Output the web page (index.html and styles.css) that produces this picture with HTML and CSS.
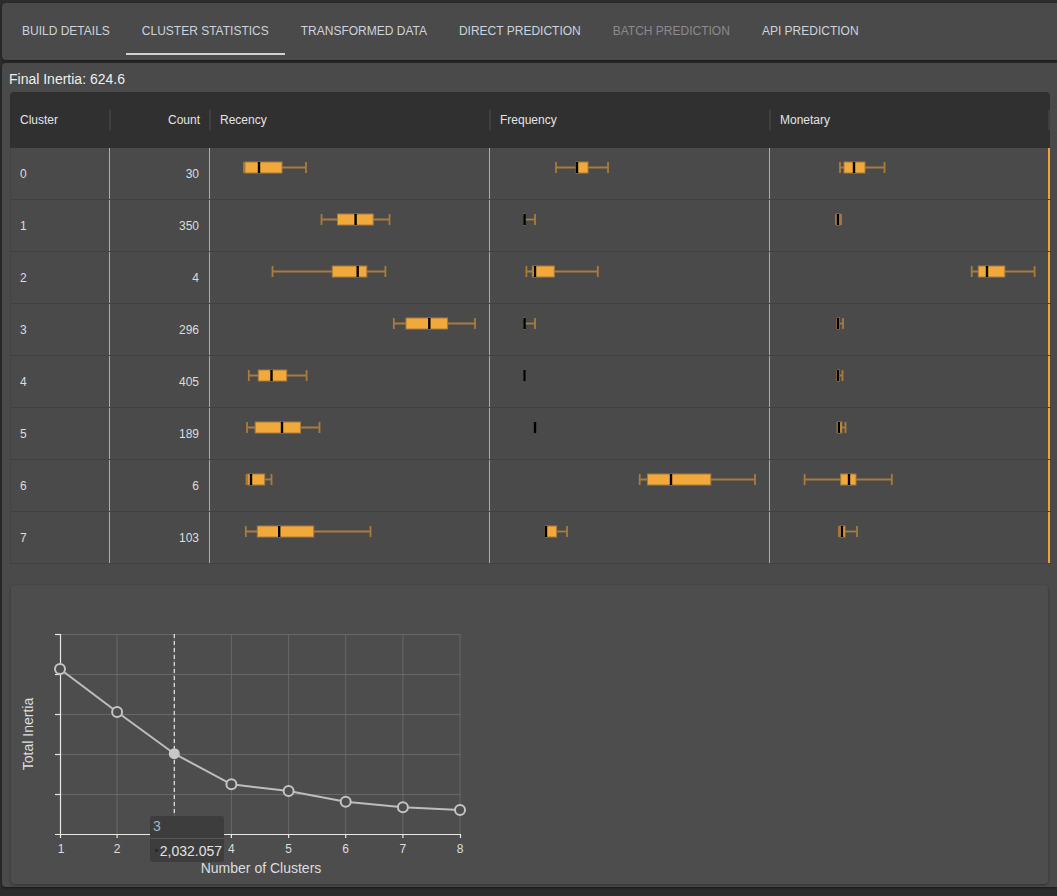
FILE: index.html
```html
<!DOCTYPE html>
<html>
<head>
    <title>Cluster Statistics</title>
    <link rel="stylesheet" href="styles.css">
</head>
<body>
    <div class="card tab-bar">
        <div class="tab">Build Details</div>
        <div class="tab active">Cluster Statistics</div>
        <div class="tab">Transformed Data</div>
        <div class="tab">Direct Prediction</div>
        <div class="tab disabled">Batch Prediction</div>
        <div class="tab">API Prediction</div>
    </div>

    <div class="card content">
        <div class="inertia">Final Inertia: 624.6</div>

        <div class="stats-table">
            <div class="head-row">
                <div class="head-cell">Cluster</div>
                <div class="head-cell sep num">Count</div>
                <div class="head-cell sep">Recency</div>
                <div class="head-cell sep">Frequency</div>
                <div class="head-cell sep last">Monetary</div>
            </div>
            <div class="body-rows"></div>
        </div>

        <div class="chart-panel">
            <svg class="elbow" width="1037" height="299" viewBox="0 0 1037 299">
                <g class="grid">
                    <line x1="106.1" y1="49" x2="106.1" y2="249"/>
                    <line x1="163.3" y1="49" x2="163.3" y2="249"/>
                    <line x1="220.4" y1="49" x2="220.4" y2="249"/>
                    <line x1="277.6" y1="49" x2="277.6" y2="249"/>
                    <line x1="334.7" y1="49" x2="334.7" y2="249"/>
                    <line x1="391.9" y1="49" x2="391.9" y2="249"/>
                    <line x1="449" y1="49" x2="449" y2="249"/>
                    <line x1="49" y1="49.5" x2="449" y2="49.5"/>
                    <line x1="49" y1="89.5" x2="449" y2="89.5"/>
                    <line x1="49" y1="129.5" x2="449" y2="129.5"/>
                    <line x1="49" y1="169.5" x2="449" y2="169.5"/>
                    <line x1="49" y1="209.5" x2="449" y2="209.5"/>
                </g>
                <g class="axis">
                    <line x1="49.5" y1="49" x2="49.5" y2="250"/>
                    <line x1="44" y1="249.5" x2="449.5" y2="249.5"/>
                    <line x1="44" y1="49.5" x2="49" y2="49.5"/>
                    <line x1="44" y1="89.5" x2="49" y2="89.5"/>
                    <line x1="44" y1="129.5" x2="49" y2="129.5"/>
                    <line x1="44" y1="169.5" x2="49" y2="169.5"/>
                    <line x1="44" y1="209.5" x2="49" y2="209.5"/>
                    <line x1="49.5" y1="249" x2="49.5" y2="253"/>
                    <line x1="106.1" y1="249" x2="106.1" y2="253"/>
                    <line x1="163.3" y1="249" x2="163.3" y2="253"/>
                    <line x1="220.4" y1="249" x2="220.4" y2="253"/>
                    <line x1="277.6" y1="249" x2="277.6" y2="253"/>
                    <line x1="334.7" y1="249" x2="334.7" y2="253"/>
                    <line x1="391.9" y1="249" x2="391.9" y2="253"/>
                    <line x1="449.5" y1="249" x2="449.5" y2="253"/>
                </g>
                <!-- label 3 sits under the tooltip -->
                <g class="tick-labels">
                    <text x="50" y="267.5">1</text>
                    <text x="106.1" y="267.5">2</text>
                    <text x="220.4" y="267.5">4</text>
                    <text x="277.6" y="267.5">5</text>
                    <text x="334.7" y="267.5">6</text>
                    <text x="391.9" y="267.5">7</text>
                    <text x="449" y="267.5">8</text>
                </g>
                <text class="axis-title" x="250" y="288">Number of Clusters</text>
                <text class="axis-title" x="22" y="149" transform="rotate(-90 22 149)">Total Inertia</text>

                <line class="cursor" x1="163.3" y1="49" x2="163.3" y2="231"/>

                <polyline class="series" points="49,84 106.1,127 163.3,168.7 220.4,199.3 277.6,206 334.7,216.7 391.9,222.3 449,225"/>
                <g class="dots">
                    <circle cx="49" cy="84" r="5"/>
                    <circle cx="106.1" cy="127" r="5"/>
                    <circle cx="220.4" cy="199.3" r="5"/>
                    <circle cx="277.6" cy="206" r="5"/>
                    <circle cx="334.7" cy="216.7" r="5"/>
                    <circle cx="391.9" cy="222.3" r="5"/>
                    <circle cx="449" cy="225" r="5"/>
                </g>
                <circle class="dot-active" cx="163.3" cy="168.7" r="5.5"/>
            </svg>

            <div class="tooltip">
                <div class="tooltip-title">3</div>
                <div class="tooltip-value"><span class="swatch"></span>2,032.057</div>
            </div>
        </div>
    </div>

    <script>
        // page x positions of each box plot: [min, q1, median, q3, max]
        const clusters = [
            { id: 0, count: 30,
              r: [244, 245, 259, 282, 306], f: [556, 576, 577, 588, 608], m: [840, 844, 854, 865, 884.5] },
            { id: 1, count: 350,
              r: [321.5, 337.5, 355.6, 373.2, 389.5], f: [524, 524, 524.5, 524.5, 535], m: [836, 836.5, 838, 840, 841] },
            { id: 2, count: 4,
              r: [272.5, 332.3, 357.7, 366.8, 385.4], f: [526.4, 532.3, 535, 554.3, 597.8], m: [971.7, 978.3, 987, 1004.8, 1034.6] },
            { id: 3, count: 296,
              r: [393.8, 406, 429.3, 447.6, 475], f: [524, 524, 524.5, 524.5, 535], m: [837, 837.5, 838, 839.5, 843] },
            { id: 4, count: 405,
              r: [248.8, 258.3, 271.5, 286.7, 306.6], f: [524.5, 524.5, 524.5, 524.5, 524.5], m: [837, 837.5, 838, 839.5, 842.5] },
            { id: 5, count: 189,
              r: [247, 255.2, 282, 300.5, 319.5], f: [535, 535, 535, 535, 535], m: [837.5, 837.7, 839, 841.8, 845.5] },
            { id: 6, count: 6,
              r: [246.5, 247.8, 251, 264.7, 271.5], f: [639.7, 647.5, 671, 710.8, 755], m: [804.6, 840.7, 849, 856, 891.8] },
            { id: 7, count: 103,
              r: [245.8, 257.3, 279.2, 313.7, 370.5], f: [545.5, 545.5, 546, 556.6, 567], m: [839, 840, 842, 845, 857] }
        ];

        function boxPlot(values, colStart) {
            const [lo, q1, med, q3, hi] = values.map(v => v - colStart - 1);
            return `<svg class="box" width="278" height="51">
                <line class="whisker" x1="${lo}" y1="19.5" x2="${hi}" y2="19.5"/>
                <line class="whisker" x1="${lo}" y1="14" x2="${lo}" y2="25"/>
                <line class="whisker" x1="${hi}" y1="14" x2="${hi}" y2="25"/>
                <rect class="iqr" x="${q1}" y="14" width="${q3 - q1}" height="11"/>
                <line class="median" x1="${med}" y1="14" x2="${med}" y2="25"/>
            </svg>`;
        }

        const body = document.querySelector('.body-rows');
        clusters.forEach(c => {
            const row = document.createElement('div');
            row.className = 'row';
            row.innerHTML = `
                <div class="cell first">${c.id}</div>
                <div class="cell line num">${c.count}</div>
                <div class="cell line plot">${boxPlot(c.r, 209)}</div>
                <div class="cell line plot">${boxPlot(c.f, 489)}</div>
                <div class="cell line plot last">${boxPlot(c.m, 769)}</div>`;
            body.appendChild(row);
        });
    </script>
</body>
</html>
```

FILE: styles.css
```css
body {
    margin: 0;
    background-color: #2c2c2c;
    font-family: "Liberation Sans", Arial, sans-serif;
    color: #dddddd;
    min-height: 896px;
    overflow: hidden;
}
.card {
    background-color: #4a4a4a;
    border-radius: 4px 0 0 4px;
    box-shadow: 0 1px 3px rgba(0,0,0,0.45);
    margin-left: 2px;
}
.tab-bar {
    display: flex;
    margin-top: 3px;
    height: 57px;
    box-sizing: border-box;
    padding: 4px 0 5px 4px;
}
.tab {
    height: 48px;
    min-width: 90px;
    padding: 0 16px;
    box-sizing: border-box;
    display: flex;
    align-items: center;
    justify-content: center;
    font-size: 12px;
    text-transform: uppercase;
    color: #cdd3dc;
    white-space: nowrap;
    border-bottom: 2px solid transparent;
    padding-top: 1px;
}
.tab.active {
    border-bottom-color: #d2d2d2;
}
.tab.disabled {
    color: #8b8b8b;
}
.content {
    margin-top: 3px;
    height: 824px;
    box-sizing: border-box;
    padding: 6px 0 3px 7px;
}
.inertia {
    font-size: 14px;
    line-height: 20px;
    color: #eeeeee;
    margin-bottom: 3px;
}
.stats-table {
    width: 1040px;
    margin-left: 1px;
}
.head-row,
.row {
    display: grid;
    grid-template-columns: 99px 100px 280px 280px 281px;
}
.head-row {
    height: 56px;
    background-color: #303030;
    border-radius: 4px 4px 0 0;
}
.head-cell {
    position: relative;
    display: flex;
    align-items: center;
    padding: 0 10px;
    font-size: 12px;
    color: #e4e4e4;
}
.head-cell.sep {
    padding-left: 11px;
}
.head-cell.num {
    justify-content: flex-end;
    padding-right: 9px;
}
.head-cell.sep::before,
.head-cell.last::after {
    content: "";
    position: absolute;
    left: 0;
    top: 18px;
    width: 2px;
    height: 20px;
    background-color: #3f3f3f;
}
.head-cell.last::after {
    left: auto;
    right: 0;
}
.row {
    height: 52px;
    box-sizing: border-box;
    border-bottom: 1px solid #414141;
}
.cell {
    display: flex;
    align-items: center;
    font-size: 12px;
    color: #dddddd;
}
.cell.first {
    border-left: 1px solid #444444;
    padding-left: 9px;
}
.cell.line {
    border-left: 1px solid #f2a132;
}
.cell.num {
    justify-content: flex-end;
    padding-right: 10px;
}
.cell.plot {
    align-items: flex-start;
}
.cell.last {
    border-right: 2px solid #f2a132;
}
.box {
    display: block;
}
.box .whisker {
    stroke: #a87b3e;
    stroke-width: 1.8;
}
.box .iqr {
    fill: #f2a93b;
    stroke: #a87b3e;
    stroke-width: 1;
}
.box .median {
    stroke: #000000;
    stroke-width: 2.4;
}
.chart-panel {
    position: relative;
    width: 1037px;
    height: 299px;
    margin: 21px 0 0 2px;
    background-color: #4d4d4d;
    border-radius: 4px;
    box-shadow: 0 1px 3px rgba(0,0,0,0.35);
}
.elbow {
    display: block;
}
.elbow .grid line {
    stroke: #686868;
    stroke-width: 1;
}
.elbow .axis line {
    stroke: #e8e8e8;
    stroke-width: 1.2;
}
.elbow .tick-labels text {
    font-size: 12px;
    fill: #dddddd;
    text-anchor: middle;
}
.elbow .axis-title {
    font-size: 14px;
    fill: #dddddd;
    text-anchor: middle;
}
.elbow .cursor {
    stroke: #e6e6e6;
    stroke-width: 1.2;
    stroke-dasharray: 4 3;
}
.elbow .series {
    fill: none;
    stroke: #bdbdbd;
    stroke-width: 2;
}
.elbow .dots circle {
    fill: #4d4d4d;
    stroke: #c4c4c4;
    stroke-width: 2;
}
.elbow .dot-active {
    fill: #c8c8c8;
}
.tooltip {
    position: absolute;
    left: 139px;
    top: 231px;
    width: 74px;
    height: 46px;
    background-color: #3d3d3d;
    border-radius: 3px;
    font-size: 14px;
}
.tooltip-title {
    height: 22px;
    line-height: 21px;
    padding-left: 3px;
    color: #a9b3c3;
    border-bottom: 1px solid #555555;
}
.tooltip-value {
    display: flex;
    align-items: center;
    justify-content: flex-end;
    height: 23px;
    padding-right: 2px;
    color: #e2e2e2;
}
.swatch {
    width: 3px;
    height: 3px;
    background-color: #2a2a2a;
    margin-right: auto;
    margin-left: 5px;
}
```
